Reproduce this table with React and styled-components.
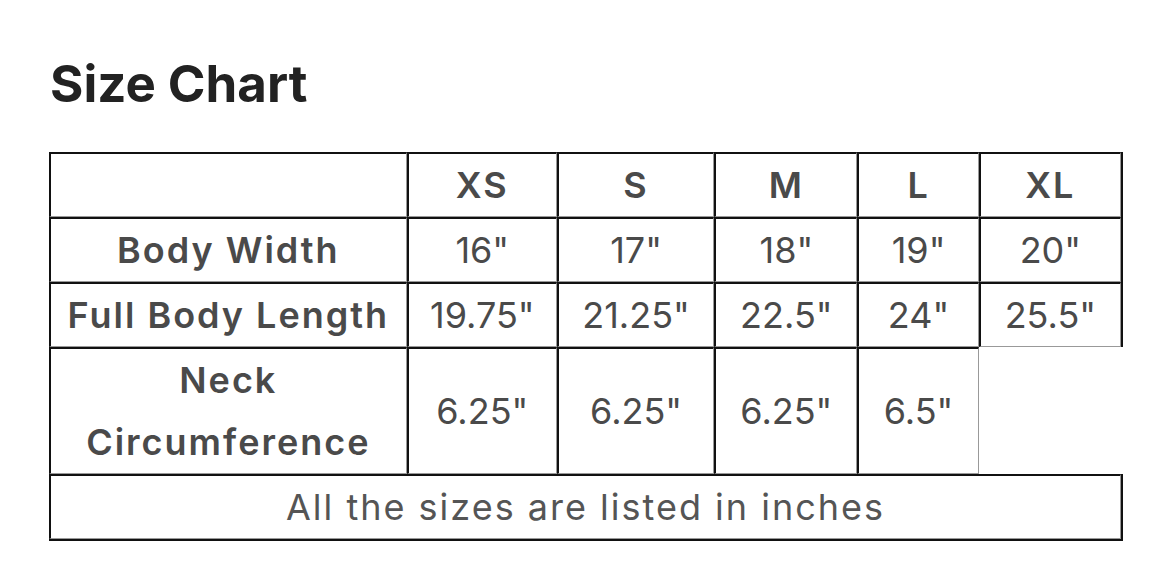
import React from 'react';
import styled, { createGlobalStyle } from 'styled-components';

const GlobalStyle = createGlobalStyle`
  body {
    margin: 0;
    background: #fff;
    font-family: Inter, "Liberation Sans", sans-serif;
  }
`;

const Page = styled.div`
  padding: 54px 0 40px 49px;
`;

const Title = styled.h2`
  margin: 0 0 38px 1px;
  font-size: 51px;
  line-height: 60px;
  font-weight: 700;
  color: #222;
`;

const Table = styled.table`
  width: 1072px;
  table-layout: fixed;
  border-collapse: separate;
  border-spacing: 0;
  color: #4a4a4a;
  font-size: 36px;
`;

const Cell = styled.td`
  padding: 0;
  text-align: center;
  vertical-align: middle;
  line-height: 62px;
  font-weight: ${({ $bold }) => ($bold ? 600 : 400)};
  letter-spacing: ${({ $bold }) => ($bold ? '2px' : '0')};
  border-top: 2px solid #111;
  border-left: 2px solid #111;
  border-bottom: 1px solid #999;
  border-right: 1px solid #999;
  box-shadow: ${({ $right, $bottom }) =>
    [$right && '2px 0 0 #111', $bottom && '0 2px 0 #111', $right && $bottom && '2px 2px 0 #111']
      .filter(Boolean)
      .join(', ') || 'none'};
`;

const Note = styled(Cell)`
  color: #555;
  letter-spacing: 2px;
`;

const sizes = ['XS', 'S', 'M', 'L', 'XL'];
const widths = [357, 150, 157, 143, 121, 142];

const rows = [
  { label: 'Body Width', values: ['16"', '17"', '18"', '19"', '20"'] },
  { label: 'Full Body Length', values: ['19.75"', '21.25"', '22.5"', '24"', '25.5"'] },
  { label: <>Neck<br />Circumference</>, values: ['6.25"', '6.25"', '6.25"', '6.5"'] },
];

export default function App() {
  return (
    <Page>
      <GlobalStyle />
      <Title>Size Chart</Title>
      <Table>
        <colgroup>
          {widths.map((w, i) => (
            <col key={i} style={{ width: w }} />
          ))}
        </colgroup>
        <tbody>
          <tr>
            <Cell />
            {sizes.map((s, i) => (
              <Cell key={s} $bold $right={i === sizes.length - 1}>
                {s}
              </Cell>
            ))}
          </tr>
          {rows.map((row, r) => (
            <tr key={r}>
              <Cell $bold>{row.label}</Cell>
              {row.values.map((v, i) => (
                <Cell key={i} $right={i === 4}>
                  {v}
                </Cell>
              ))}
            </tr>
          ))}
          <tr>
            <Note colSpan={6} $right $bottom>
              All the sizes are listed in inches
            </Note>
          </tr>
        </tbody>
      </Table>
    </Page>
  );
}
